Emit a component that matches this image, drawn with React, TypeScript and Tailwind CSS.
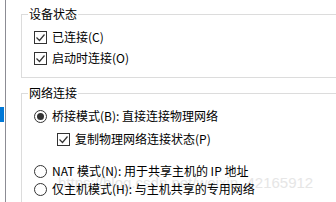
import React from 'react';

const font = { fontFamily: '"Noto Sans CJK SC", "Noto Sans", sans-serif' };

function CheckBox() {
  return (
    <span className="flex h-[13px] w-[13px] shrink-0 items-center justify-center border border-[#333333] bg-white">
      <svg width="11" height="11" viewBox="0 0 11 11">
        <path d="M1.5 5.5 L4.5 8.5 L9.5 2.5" fill="none" stroke="#333333" strokeWidth="1.2" />
      </svg>
    </span>
  );
}

function Radio({ checked }: { checked?: boolean }) {
  return (
    <span className="flex h-[13px] w-[13px] shrink-0 items-center justify-center rounded-full border border-[#333333] bg-white">
      {checked && <span className="h-[7px] w-[7px] rounded-full bg-[#333333]" />}
    </span>
  );
}

function Row({ children, className = '' }: { children: React.ReactNode; className?: string }) {
  return <div className={`flex items-center gap-[5px] ${className}`}>{children}</div>;
}

export default function App() {
  return (
    <div
      className="relative flex h-[202px] w-[336px] overflow-hidden bg-white text-[12px] leading-[16px] text-black"
      style={font}
    >
      {/* list edge on the left */}
      <div className="flex w-[5px] shrink-0 flex-col">
        <div className="h-[107px]" />
        <div className="h-[15px] w-[4px] bg-[#0078d7]" />
      </div>
      <div className="w-px shrink-0 bg-[#8c8c94]" />

      {/* watermark, sits behind the dialog text */}
      <div
        className="pointer-events-none absolute left-[58px] top-[174px] text-[15px] leading-[18px] text-[#e6e6e6]"
        style={{ fontFamily: '"Liberation Sans", Arial, sans-serif' }}
      >
        https://blog.csdn.net/weixin_42165912
      </div>

      <div className="relative ml-[15px] flex w-[340px] shrink-0 flex-col pt-[6px]">
        <fieldset className="border border-[#dcdcdc] px-[6px] pb-[9px]">
          <legend className="px-[1px]">设备状态</legend>
          <div className="flex flex-col gap-[1px] pl-[6px] pt-[5px]">
            <Row className="h-[20px]">
              <CheckBox />
              <span>已连接(C)</span>
            </Row>
            <Row className="h-[20px]">
              <CheckBox />
              <span>启动时连接(O)</span>
            </Row>
          </div>
        </fieldset>

        <fieldset className="mt-[7px] border border-[#dcdcdc] px-[6px] pb-[20px]">
          <legend className="px-[1px]">网络连接</legend>
          <div className="flex flex-col pl-[6px] pt-[5px]">
            <Row className="h-[20px]">
              <Radio checked />
              <span>桥接模式(B): 直接连接物理网络</span>
            </Row>
            <Row className="mt-[3px] ml-[23px] h-[20px]">
              <CheckBox />
              <span>复制物理网络连接状态(P)</span>
            </Row>
            <Row className="mt-[13px] h-[18px]">
              <Radio />
              <span>NAT 模式(N): 用于共享主机的 IP 地址</span>
            </Row>
            <Row className="h-[18px]">
              <Radio />
              <span>仅主机模式(H): 与主机共享的专用网络</span>
            </Row>
          </div>
        </fieldset>
      </div>
    </div>
  );
}
